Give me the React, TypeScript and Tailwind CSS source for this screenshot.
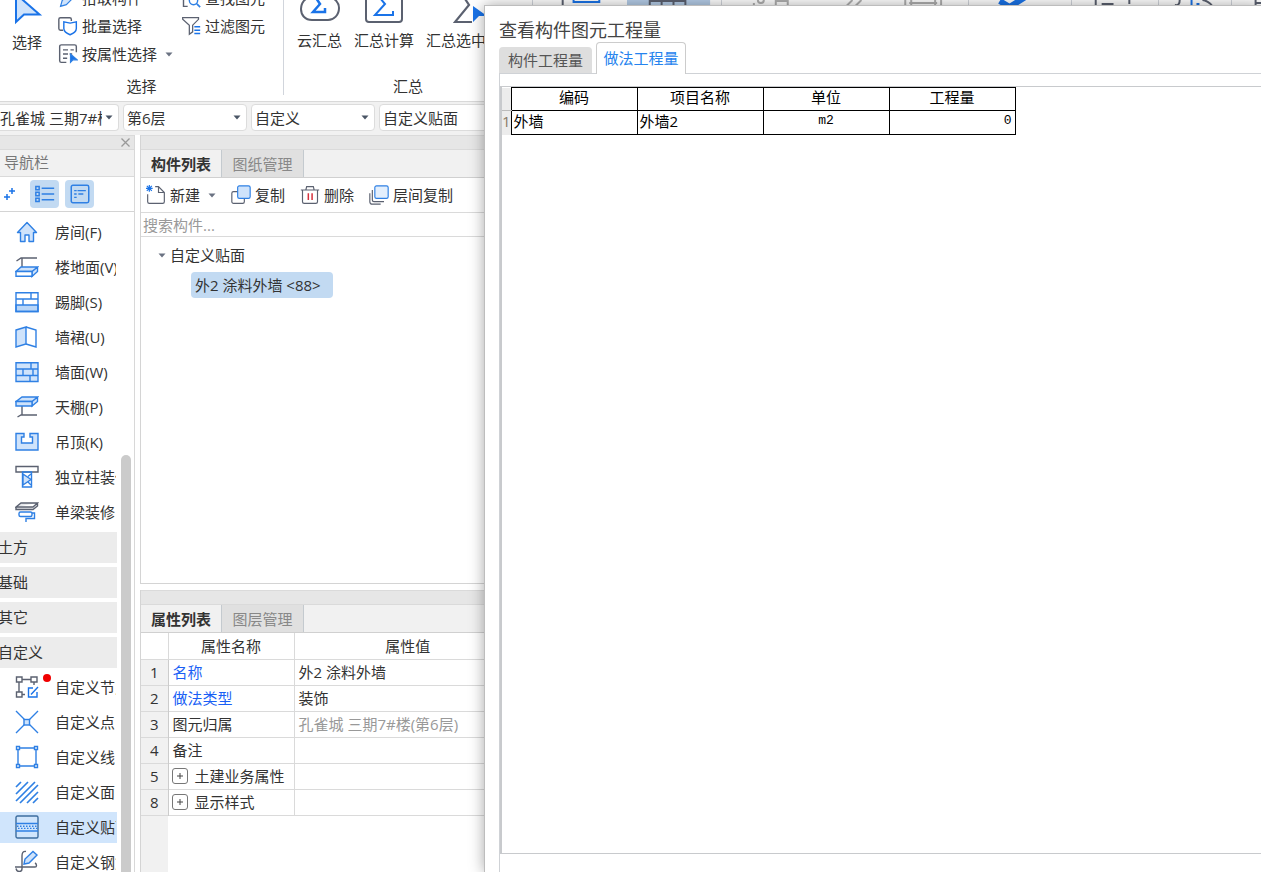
import type { ReactNode } from "react";
import clsx from "clsx";

const BLUE = "#1a73e8";
const SKY = "#2f80e4";
const PALE = "#cfe3fb";
const SLATE = "#5b6170";

type NavEntry = { label: string; icon: ReactNode; dot?: boolean; active?: boolean };

function Icon({ children, size = 24 }: { children: ReactNode; size?: number }) {
  return (
    <svg
      width={size}
      height={size}
      viewBox="0 0 24 24"
      fill="none"
      stroke={SKY}
      strokeWidth="1.4"
      className="shrink-0"
      aria-hidden="true"
    >
      {children}
    </svg>
  );
}

function Caret({ className }: { className?: string }) {
  return (
    <svg width="8" height="5" viewBox="0 0 8 5" className={clsx("shrink-0", className)} aria-hidden="true">
      <path d="M0.5 0.5h7L4 4.5z" fill="currentColor" />
    </svg>
  );
}

const decorItems: NavEntry[] = [
  {
    label: "房间(F)",
    icon: <path d="M12 2.5 2.5 12.5h3v9H10V15h4v6.5h4.5v-9h3z" fill={PALE} strokeLinejoin="round" />,
  },
  {
    label: "楼地面(V)",
    icon: (
      <>
        <path d="M1.5 6 6 3h16M7 3v9" stroke={SLATE} />
        <path d="M1 16.5 6 12h16.5L17 16.5zM17 16.5v5l5.5-5V12" fill={PALE} />
        <path d="M1 16.5h16v4.8H1z" fill="#fff" />
      </>
    ),
  },
  {
    label: "踢脚(S)",
    icon: (
      <>
        <path d="M1 15h22v6.5H1z" fill="#b9d6f8" />
        <path d="M1 2.7h22v18.8H1zM1 9h22M16 2.7V9M8 9v6" />
      </>
    ),
  },
  {
    label: "墙裙(U)",
    icon: (
      <>
        <path d="M1 5 11 2v17L1 22z" fill={PALE} />
        <path d="m11 2 10 3v17l-10-3" />
      </>
    ),
  },
  {
    label: "墙面(W)",
    icon: (
      <>
        <path d="M1 2.7h22v18.8H1z" fill={PALE} />
        <path d="M1 9h22M1 15.5h22M16 2.7V9M8 9v6.5M18 9v6.5M15 15.5v6" />
      </>
    ),
  },
  {
    label: "天棚(P)",
    icon: (
      <>
        <path d="M7 10v10M2.5 22 6 20h16" stroke={SLATE} />
        <path d="M1 6.5 7 2h15.5L17 6.5zM17 6.5V11l5.5-4.5V2" fill={PALE} />
        <path d="M1 6.5h16V11H1z" fill={PALE} />
      </>
    ),
  },
  {
    label: "吊顶(K)",
    icon: <path d="M1 3.5h8V7H6.5v6h11V7H15V3.5h8V20H1z" fill={PALE} />,
  },
  {
    label: "独立柱装修",
    icon: (
      <>
        <path d="M1 1.5h22V7H1z" stroke={SLATE} />
        <path d="M7.5 7h9v15h-9z" />
        <path d="m8 9 8 5.5L8 20z" fill={PALE} />
        <path d="m16 9-3 2.5M16 20l-3-3" />
      </>
    ),
  },
  {
    label: "单梁装修",
    icon: (
      <>
        <path d="M1 7 6 3h16.5L18 7zM1 7v2.5h17L22.5 6V3" stroke={SLATE} fill="#e5e7eb" />
        <rect x="4" y="12" width="13" height="4.5" rx="1.5" fill="#fff" />
        <path d="M17 13h2.5v5.5H11V22" />
      </>
    ),
  },
];

const sections = ["土方", "基础", "其它", "自定义"];

const customItems: NavEntry[] = [
  {
    label: "自定义节点",
    dot: true,
    icon: (
      <g stroke={SLATE}>
        <path d="M1.5 2H7v5H1.5zM16 2h6v5h-6zM1.5 17H7v5H1.5zM7 4.5h9M4 7v10M19 7v3M7 19.500h3" />
        <path d="M18 13h-4.500v9H22v-5M16 19.500l7-7.500" stroke={BLUE} />
      </g>
    ),
  },
  {
    label: "自定义点",
    icon: (
      <>
        <path d="m1 1 8.500 8.500M23 1l-8.500 8.500M1 23l8.500-8.500M23 23l-8.500-8.500" />
        <rect x="9" y="9.500" width="5.500" height="5.500" fill={PALE} />
      </>
    ),
  },
  {
    label: "自定义线",
    icon: (
      <>
        <path d="M3 3h18v18H3z" />
        <path d="M1.5 1.5h3v3h-3zM19.5 1.5h3v3h-3zM1.5 19.5h3v3h-3zM19.5 19.5h3v3h-3z" fill="#fff" />
      </>
    ),
  },
  {
    label: "自定义面",
    icon: <path d="M1 7l5-5M1 14 13 2M1 21 20 2M5 23 23 5M12 23l11-11M18 23l5-5" strokeWidth="1.7" />,
  },
  {
    label: "自定义贴面",
    active: true,
    icon: (
      <>
        <rect x="1" y="1" width="22" height="22" rx="1.5" stroke="#3d6d9e" />
        <path d="M1 8.500h22M1 16h22" />
        <path d="M2 11.200h20M3 13.400h20" strokeDasharray="1.5 1.5" />
      </>
    ),
  },
  {
    label: "自定义钢筋",
    icon: (
      <>
        <path d="M11 1.500C8 1 7 3 7 6v13c0 3-5 4-6-.5M0 17h20c2 0 2-3 0-4" stroke={SLATE} />
        <path d="m9 14 1-5 8-7.500 4 3.500-8 8z" fill={PALE} />
      </>
    ),
  },
];

const properties = [
  { no: 1, name: "名称", value: "外2 涂料外墙", link: true },
  { no: 2, name: "做法类型", value: "装饰", link: true },
  { no: 3, name: "图元归属", value: "孔雀城 三期7#楼(第6层)", muted: true },
  { no: 4, name: "备注", value: "" },
  { no: 5, name: "土建业务属性", value: "", expandable: true },
  { no: 8, name: "显示样式", value: "", expandable: true },
];

const filters = [
  { label: "楼栋", value: "孔雀城 三期7#楼" },
  { label: "楼层", value: "第6层" },
  { label: "类别", value: "自定义" },
  { label: "构件类型", value: "自定义贴面" },
];

function ToolRow({ icon, label, caret }: { icon: ReactNode; label: string; caret?: boolean }) {
  return (
    <button type="button" className="flex h-7 items-center gap-1 whitespace-nowrap">
      {icon}
      {label}
      {caret && <Caret className="ml-1 text-gray-500" />}
    </button>
  );
}

function RibbonStub({ className, children }: { className: string; children: ReactNode }) {
  return (
    <div className={clsx("flex h-full shrink-0 items-start justify-center border-r border-gray-300", className)}>
      {children}
    </div>
  );
}

function Ribbon() {
  return (
    <div className="flex h-[102px] shrink-0 items-end overflow-hidden border-b border-[#d9d9d9] bg-white">
      <div className="flex w-[283px] shrink-0 flex-col pb-[5px]">
        <div className="flex items-end">
          <button type="button" className="mb-4 ml-3 flex shrink-0 flex-col items-start leading-5">
            <svg width="32" height="40" viewBox="0 0 32 40" aria-hidden="true">
              <path d="M4 2v28l8-7.500h15.500z" fill={PALE} stroke={BLUE} strokeWidth="2" />
            </svg>
            选择
          </button>
          <div className="ml-[14px] flex flex-col">
            <ToolRow
              label="拾取构件"
              icon={
                <Icon size={20}>
                  <path d="m3 22 2-7L16 4l5 5L10 20z" fill={PALE} />
                </Icon>
              }
            />
            <ToolRow
              label="批量选择"
              icon={
                <Icon size={20}>
                  <path d="M6 17H3a2 2 0 0 1-2-2V4a2 2 0 0 1 2-2h11a2 2 0 0 1 2 2v2" stroke={SLATE} strokeWidth="1.7" />
                  <path d="M14.500 8.500 22 7v8c0 4-3 5.500-7.500 7.500C10 20.500 7 19 7 15V7z" fill="#fff" stroke={BLUE} strokeWidth="1.7" />
                </Icon>
              }
            />
            <ToolRow
              label="按属性选择"
              caret
              icon={
                <Icon size={20}>
                  <path d="M10 22H4a2 2 0 0 1-2-2V3a2 2 0 0 1 2-2h16a2 2 0 0 1 2 2v7M6 7h6M15 7h4M6 12h6M6 17h5M14 12h3" stroke={SLATE} strokeWidth="1.7" />
                  <path d="M15 12v10l3-3h5z" fill={BLUE} />
                </Icon>
              }
            />
          </div>
          <div className="ml-2 flex flex-col pb-7">
            <ToolRow
              label="查找图元"
              icon={
                <Icon size={20}>
                  <path d="M8 22H3V3h17v5" stroke={SLATE} strokeWidth="1.7" />
                  <circle cx="15" cy="15" r="5" strokeWidth="1.7" />
                  <path d="m19 19 4 4" strokeWidth="2" />
                </Icon>
              }
            />
            <ToolRow
              label="过滤图元"
              icon={
                <Icon size={20}>
                  <path d="M2 2h19v2l-7 7v8l-4 3V11L2 4z" stroke={SLATE} strokeWidth="1.5" />
                  <path d="M16 13h7M16 17h7M16 21h7" stroke={BLUE} strokeWidth="1.8" />
                </Icon>
              }
            />
          </div>
        </div>
        <div className="mt-2 text-center leading-5">选择</div>
      </div>
      <div className="mb-1.5 h-full w-px shrink-0 bg-gray-300" />
      <div className="flex w-[248px] shrink-0 flex-col pb-[5px]">
        <div className="mb-[26px] flex items-end gap-3 pl-[13px] leading-5">
          <button type="button" className="flex w-[45px] shrink-0 flex-col items-center">
            <svg width="42" height="40" viewBox="0 0 42 40" className="mb-2" fill="none" aria-hidden="true">
              <path d="M10 15C11 1 31 1 32 15c4 2 8 5 8 11 0 7-5 12-11 12H13C6 38 2 33 2 27s4-10 8-12z" stroke={SLATE} strokeWidth="2" />
              <path d="M26 18V13H15l6 9-7 8h12v-4" stroke={BLUE} strokeWidth="2.5" />
            </svg>
            云汇总
          </button>
          <button type="button" className="flex w-[60px] shrink-0 flex-col items-center">
            <svg width="38" height="40" viewBox="0 0 38 40" className="mb-[7px]" fill="none" aria-hidden="true">
              <rect x="1" y="3" width="36" height="36" rx="3" stroke={SLATE} strokeWidth="2" />
              <path d="M28 14V9H10l10 12-10 11h18v-4" stroke={BLUE} strokeWidth="2" />
            </svg>
            汇总计算
          </button>
          <button type="button" className="flex w-[90px] shrink-0 flex-col items-start whitespace-nowrap">
            <svg width="36" height="40" viewBox="0 0 36 40" className="mb-[7px] ml-[27px]" fill="none" aria-hidden="true">
              <path d="M26 8V2H3l13 20L2 39h17" stroke={SLATE} strokeWidth="2.2" />
              <path d="M20 23v16l6-6h8z" fill={BLUE} />
            </svg>
            汇总选中
          </button>
        </div>
        <div className="text-center leading-5">汇总</div>
      </div>
      <RibbonStub className="w-[190px] border-l">
        <svg width="190" height="6" viewBox="0 0 190 6" fill="none" aria-hidden="true">
          <path d="M95 0h84v6H95z" fill="#b5cde8" />
          <path d="M30 0v6" stroke={SLATE} strokeWidth="2" />
          <path d="M41 0v2h26V0" stroke={BLUE} strokeWidth="2" />
          <path d="M118 6V0M130 6V0M142 6V0M154 6V0M118 1h36" stroke={SLATE} strokeWidth="2" />
        </svg>
      </RibbonStub>
      <RibbonStub className="w-[247px]">
        <svg width="247" height="6" viewBox="0 0 247 6" fill="none" stroke="#b0b0b0" strokeWidth="2" aria-hidden="true">
          <path d="M31 4h2M36 0a3 3 0 0 0 6 0M54 6V0M66 6V0M54 1h12M125 6l6-6M134 6l6-6M184 6V0M220 6V0M188 3h28M190 0v6M214 0v6" />
        </svg>
      </RibbonStub>
      <RibbonStub className="w-[103px]">
        <svg width="103" height="6" viewBox="0 0 103 6" fill="none" aria-hidden="true">
          <path d="m31 1 10 6L60-5" stroke={BLUE} strokeWidth="6" />
        </svg>
      </RibbonStub>
      <RibbonStub className="w-[87px]">
        <svg width="87" height="6" viewBox="0 0 87 6" fill="none" stroke={SLATE} strokeWidth="2" aria-hidden="true">
          <path d="M24 6V0M30 4h12M58 4V0" />
        </svg>
      </RibbonStub>
      <RibbonStub className="w-[73px]">
        <svg width="73" height="6" viewBox="0 0 73 6" fill="none" stroke={SLATE} strokeWidth="2" aria-hidden="true">
          <path d="M16 5c4 1 5-2 5-5M44 0c3 0 8 3 10 6" />
          <path d="M33 6V0M38 4h3" stroke={BLUE} />
        </svg>
      </RibbonStub>
      <RibbonStub className="w-[60px]">
        <svg width="60" height="6" viewBox="0 0 60 6" fill="none" stroke={SLATE} strokeWidth="2" aria-hidden="true">
          <path d="M24 6V0M24 3h20" />
        </svg>
      </RibbonStub>
    </div>
  );
}

function FilterBar() {
  return (
    <div className="flex h-[33px] shrink-0 gap-1 bg-[#f1f1f1] pt-0.5 pb-1">
      {filters.map((f, i) => (
        <label
          key={f.label}
          className={clsx("relative flex shrink-0 items-center", i === 0 ? "w-[119px]" : "w-[124px]")}
        >
          <select
            aria-label={f.label}
            className={clsx(
              "h-full w-full appearance-none rounded border border-[#dcdcdc] bg-white pr-4 leading-5",
              i === 0 ? "rounded-l-none border-l-0" : "pl-[3px]"
            )}
          >
            <option>{f.value}</option>
          </select>
          <Caret className="pointer-events-none absolute right-1.5 text-gray-600" />
        </label>
      ))}
    </div>
  );
}

function NavItem({ item }: { item: NavEntry }) {
  return (
    <button
      type="button"
      className={clsx(
        "flex h-[31px] w-full shrink-0 items-center overflow-hidden pb-0.5 pl-[15px] whitespace-nowrap",
        item.active && "bg-[#d0e5fc]"
      )}
    >
      <Icon>{item.icon}</Icon>
      <span className="flex h-full w-4 shrink-0 items-start pt-0.5 pl-1">
        {item.dot && <span className="h-2 w-2 rounded-full bg-[#f00000]" />}
      </span>
      <span className="w-[61px] shrink-0 overflow-hidden text-left">{item.label}</span>
    </button>
  );
}

function Sidebar() {
  return (
    <nav className="flex w-[135px] shrink-0 flex-col border-r border-[#d8d8d8] bg-white">
      <div className="flex h-[15px] shrink-0 items-center justify-end border-y border-[#dadada] bg-[#e6e6e6] pr-1">
        <button type="button" aria-label="关闭">
          <svg width="9" height="9" viewBox="0 0 9 9" stroke="#999" strokeWidth="1.3" aria-hidden="true">
            <path d="m0.500 0.500 8 8M8.500 0.500l-8 8" />
          </svg>
        </button>
      </div>
      <div className="flex h-[27px] shrink-0 items-center border-b border-[#dadada] bg-[#f1f1f1] pb-0.5 pl-1 text-[#777]">
        导航栏
      </div>
      <div className="flex h-[35px] shrink-0 items-center gap-1.5 border-b border-[#d4d4d4] pl-[3px]">
        <button type="button" aria-label="全部展开" className="mr-2">
          <svg width="13" height="16" viewBox="0 0 13 16" stroke={BLUE} strokeWidth="1.5" aria-hidden="true">
            <path d="M6 5h6M9 2v6M1 11h6M4 8v6" />
          </svg>
        </button>
        <button type="button" aria-label="列表" className="flex h-7 w-[29px] items-center justify-center rounded bg-[#c2daf2]">
          <Icon size={20}>
            <path d="M1 3h4v4H1zM1 10h4v4H1zM1 17h4v4H1zM8 5h15M8 12h15M8 19h15" strokeWidth="1.8" />
          </Icon>
        </button>
        <button type="button" aria-label="详情" className="flex h-7 w-[29px] items-center justify-center rounded bg-[#c2daf2]">
          <Icon size={20}>
            <rect x="1.5" y="1.5" width="21" height="21" rx="2" strokeWidth="1.8" />
            <path d="M5 8h3M9 8h10M5 12h3M10 12h6M5 16h3" strokeWidth="1.6" />
          </Icon>
        </button>
      </div>
      <div className="flex min-h-0 flex-1 gap-1 overflow-hidden">
        <div className="flex w-[117px] shrink-0 flex-col gap-1 overflow-hidden pt-[5px]">
          {decorItems.map((item) => (
            <NavItem key={item.label} item={item} />
          ))}
          {sections.map((name) => (
            <button key={name} type="button" className="flex h-[31px] shrink-0 items-center bg-[#ececec] pb-0.5">
              <span className="-ml-0.5">{name}</span>
            </button>
          ))}
          {customItems.map((item) => (
            <NavItem key={item.label} item={item} />
          ))}
        </div>
        <div className="mt-[243px] w-2.5 rounded-t-full bg-[#cbcbcb]" />
      </div>
    </nav>
  );
}

function PanelTabs({ tabs }: { tabs: [string, string] }) {
  return (
    <>
      <div className="h-[15px] shrink-0 border-y border-[#dadada] bg-[#e6e6e6]" />
      <div className="flex h-7 shrink-0 border-b border-[#d0d0d0] bg-[#f1f1f1]" role="tablist">
        <button
          type="button"
          role="tab"
          aria-selected="true"
          className="w-[81px] border-r border-[#c4cacf] bg-[#f1f1f1] font-bold"
        >
          {tabs[0]}
        </button>
        <button
          type="button"
          role="tab"
          aria-selected="false"
          className="w-[82px] border-r border-[#c4cacf] bg-[#e0e0e0] text-[#888]"
        >
          {tabs[1]}
        </button>
      </div>
    </>
  );
}

function ComponentPanel() {
  return (
    <section className="flex min-h-0 flex-1 flex-col border-b border-l border-[#d4d4d4] bg-white">
      <PanelTabs tabs={["构件列表", "图纸管理"]} />
      <div className="flex h-[35px] shrink-0 items-center gap-[15px] border-b border-[#dadada] pl-[5px]">
        <ToolRow
          label="新建"
          caret
          icon={
            <Icon size={20}>
              <path d="M2 11v9a2 2 0 0 0 2 2h16a2 2 0 0 0 2-2V9l-7-7h-4M15 2v7h7" stroke={SLATE} />
              <path d="M1 1l6 6M7 1 1 7M4 0v8M0 4h8" stroke={BLUE} />
            </Icon>
          }
        />
        <ToolRow
          label="复制"
          icon={
            <Icon size={20}>
              <rect x="1" y="8" width="15" height="14" rx="2" stroke={SLATE} />
              <rect x="8" y="1" width="15" height="15" rx="2" fill={PALE} />
            </Icon>
          }
        />
        <ToolRow
          label="删除"
          icon={
            <Icon size={20}>
              <path d="M1 6h22M7 6l1-4h8l1 4M3 6v14a2 2 0 0 0 2 2h14a2 2 0 0 0 2-2V6" stroke={SLATE} />
              <path d="M10 10v8M14.500 10v8" stroke="#d6303c" strokeWidth="1.8" />
            </Icon>
          }
        />
        <ToolRow
          label="层间复制"
          icon={
            <Icon size={20}>
              <path d="M4 6v12a2 2 0 0 0 2 2h12M1 10v10a3 3 0 0 0 3 3h10" stroke={SLATE} />
              <rect x="7" y="1" width="16" height="15" rx="2" fill="#e3effd" />
            </Icon>
          }
        />
      </div>
      <input
        type="text"
        aria-label="搜索构件"
        placeholder="搜索构件..."
        className="h-6 w-full shrink-0 border-b border-[#dadada] pl-0.5 placeholder:text-[#999]"
      />
      <div className="flex flex-col items-start pt-1.5">
        <button type="button" className="ml-[17px] flex h-6 items-center gap-1">
          <Caret className="text-gray-500" />
          自定义贴面
        </button>
        <button
          type="button"
          className="mt-[5px] ml-[50px] h-[26px] w-[142px] rounded bg-[#c2daf2] px-1 text-left whitespace-nowrap"
        >
          外2 涂料外墙 &lt;88&gt;
        </button>
      </div>
    </section>
  );
}

function PropertyPanel() {
  return (
    <section className="mt-1.5 flex h-[282px] shrink-0 flex-col border-l border-[#d4d4d4] bg-white">
      <PanelTabs tabs={["属性列表", "图层管理"]} />
      <table className="w-full table-fixed border-collapse">
        <colgroup>
          <col className="w-[27px]" />
          <col className="w-[126px]" />
          <col />
        </colgroup>
        <thead>
          <tr className="h-[26px] border-b border-[#dadada]">
            <th className="border-r border-[#dadada]" />
            <th className="border-r border-[#dadada] font-normal">属性名称</th>
            <th className="font-normal">属性值</th>
          </tr>
        </thead>
        <tbody>
          {properties.map((p) => (
            <tr key={p.no} className="h-[26px] border-b border-[#dadada]">
              <td className="border-r border-[#ccc] bg-[#f1f1f1] text-center">{p.no}</td>
              <td
                className={clsx(
                  "border-r border-[#dadada] pl-1 whitespace-nowrap",
                  p.link && "text-[#1a5ff5]"
                )}
              >
                {p.expandable ? (
                  <span className="flex items-center gap-[7px]">
                    <button type="button" aria-label={`展开${p.name}`} className="-ml-px">
                      <svg width="16" height="16" viewBox="0 0 16 16" fill="none" stroke="#777" className="block" aria-hidden="true">
                        <rect x="0.5" y="0.5" width="15" height="15" rx="2.5" />
                        <path d="M5 8h6M8 5v6" stroke="#444" />
                      </svg>
                    </button>
                    {p.name}
                  </span>
                ) : (
                  p.name
                )}
              </td>
              <td className={clsx("pl-1 whitespace-nowrap", p.muted && "text-[#999]")}>{p.value}</td>
            </tr>
          ))}
        </tbody>
      </table>
      <div className="w-[27px] flex-1 bg-[#f1f1f1]" />
    </section>
  );
}

function QuantityDialog() {
  return (
    <div
      role="dialog"
      aria-labelledby="dialog-title"
      className="absolute top-[5px] right-0 bottom-0 left-[484px] flex flex-col border-t border-l border-[#bdbdbd] bg-white pl-[14px] shadow-[0_0_14px_rgba(0,0,0,0.35)]"
    >
      <h1 id="dialog-title" className="mt-3 text-[18px] leading-6 text-[#444]">
        查看构件图元工程量
      </h1>
      <div className="-mb-px flex items-end gap-1" role="tablist">
        <button
          type="button"
          role="tab"
          aria-selected="false"
          className="mb-px h-[26px] w-[93px] rounded-t bg-[#dedede] text-[#555]"
        >
          构件工程量
        </button>
        <button
          type="button"
          role="tab"
          aria-selected="true"
          className="relative h-8 w-[90px] rounded-t border border-b-0 border-[#ccc] bg-white pb-0.5 text-[#2583ee]"
        >
          做法工程量
        </button>
      </div>
      <div className="flex min-h-0 flex-1 flex-col border-t border-l border-[#cfd2d6] pt-3 pb-[18px]">
        <div className="flex-1 border-y border-l-2 border-[#c8cacd]">
          <table className="table-fixed border-collapse text-black">
            <colgroup>
              <col className="w-[7px]" />
              <col className="w-[126px]" />
              <col className="w-[126px]" />
              <col className="w-[126px]" />
              <col className="w-[126px]" />
            </colgroup>
            <thead>
              <tr className="h-[23px] align-top leading-[18px]">
                <th className="border-b border-[#bbb] bg-[#ececec]" />
                {["编码", "项目名称", "单位", "工程量"].map((h) => (
                  <th key={h} className="border border-black p-0 align-top font-normal">
                    {h}
                  </th>
                ))}
              </tr>
            </thead>
            <tbody>
              <tr className="h-6 align-top leading-5">
                <td className="bg-[#ececec] p-0 text-[#8a7a66]">1</td>
                <td className="border border-black px-0.5 py-0">外墙</td>
                <td className="border border-black px-0.5 py-0">外墙2</td>
                <td className="border border-black p-0 text-center font-['Liberation_Mono',monospace] text-[13px]">
                  m2
                </td>
                <td className="border border-black px-[3px] py-0 text-right font-['Liberation_Mono',monospace] text-[13px]">
                  0
                </td>
              </tr>
            </tbody>
          </table>
        </div>
      </div>
    </div>
  );
}

export default function App() {
  return (
    <div className="relative flex h-screen flex-col overflow-hidden bg-white font-['Open_Sans','Noto_Sans_CJK_SC',sans-serif] text-[15px] leading-5 text-[#333]">
      <Ribbon />
      <FilterBar />
      <main className="flex min-h-0 flex-1">
        <Sidebar />
        <div className="ml-[5px] flex w-[381px] shrink-0 flex-col">
          <ComponentPanel />
          <PropertyPanel />
        </div>
      </main>
      <QuantityDialog />
    </div>
  );
}
